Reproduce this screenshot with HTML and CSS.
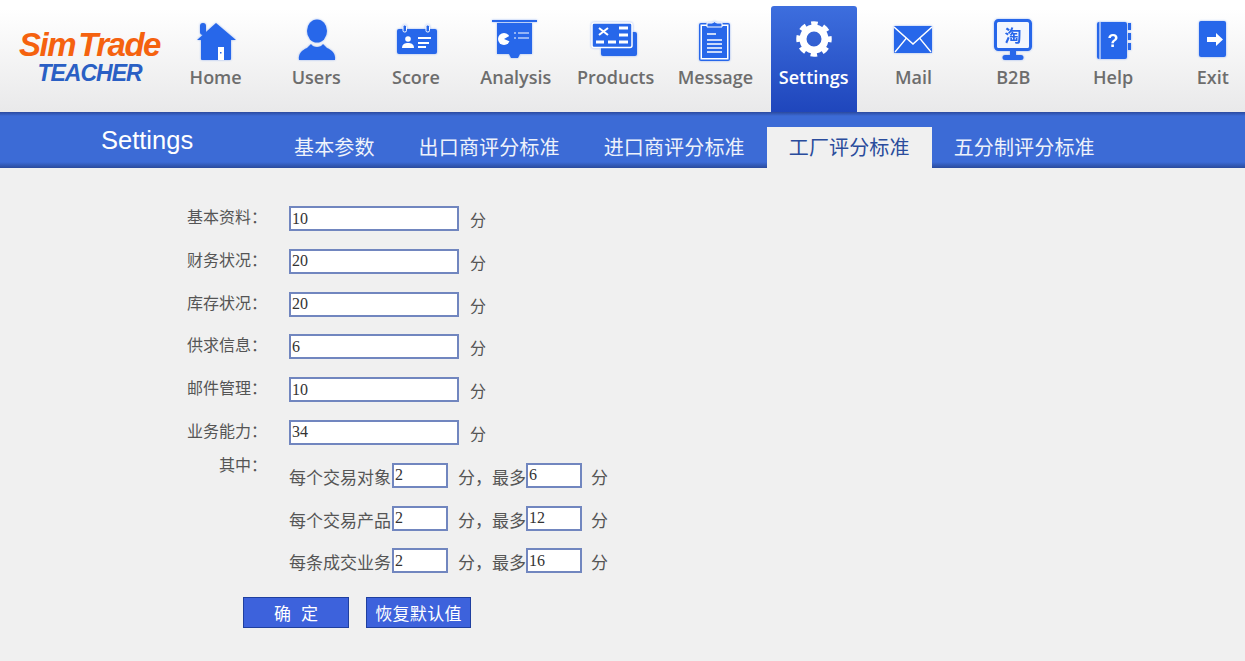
FILE: index.html
```html
<!DOCTYPE html>
<html lang="zh-CN">
<head>
    <meta charset="UTF-8">
    <title>SimTrade Teacher - Settings</title>
    <link rel="stylesheet" href="styles.css">
</head>
<body>
    <div class="header">
        <div class="logo">
            <div class="logo-top">Sim<span class="logo-gap">Trade</span></div>
            <div class="logo-sub">TEACHER</div>
        </div>
        <div class="nav">
            <a class="nav-item nav-first">
                <svg class="icon" viewBox="0 0 44 44"><rect x="6" y="6" width="6" height="12" rx="3" fill="#2767ea"/><path fill="#2767ea" d="M22 6 42 23H37V42a1 1 0 0 1-1 1H8a1 1 0 0 1-1-1V23H3z"/><rect x="24" y="30" width="6" height="13" fill="#fff"/><rect x="26" y="35" width="1.5" height="1.5" fill="#2767ea"/></svg>
                <span>Home</span>
            </a>
            <a class="nav-item">
                <svg class="icon" viewBox="0 0 44 44"><ellipse cx="23" cy="14" rx="10" ry="11.500" fill="#2767ea"/><path fill="#2767ea" d="M5 43C4 37 8 33 13 31L17 27C19 31 27 31 29 27L33 31C38 33 42 37 41 43Z"/></svg>
                <span>Users</span>
            </a>
            <a class="nav-item">
                <svg class="icon" viewBox="0 0 44 44"><rect x="3" y="12" width="40" height="25" rx="2" fill="#2767ea"/><rect x="9" y="8" width="3.500" height="7" rx="1.500" fill="#2767ea" stroke="#fff" stroke-width="1"/><rect x="32" y="8" width="3.500" height="7" rx="1.500" fill="#2767ea" stroke="#fff" stroke-width="1"/><circle cx="14" cy="22" r="2.800" fill="#fff"/><path fill="#fff" d="M8 31c0-4 3-5 6-5s6 1 6 5z"/><path stroke="#fff" stroke-width="2" d="M24 21h13M24 26h11M24 30h8"/></svg>
                <span>Score</span>
            </a>
            <a class="nav-item">
                <svg class="icon" viewBox="0 0 44 44"><path stroke="#2767ea" stroke-width="2" d="M-2 4h45"/><rect x="3" y="6" width="35" height="31" fill="#2767ea"/><path d="M15 37h11l-2 4h-7z" fill="#2767ea"/><circle cx="10" cy="22" r="6" fill="#fff"/><path d="M10 22l7-4v7z" fill="#2767ea"/><path stroke="#fff" stroke-width="1.200" d="M24 16h11M24 21h11M20 16h2M20 21h2"/></svg>
                <span>Analysis</span>
            </a>
            <a class="nav-item">
                <svg class="icon" viewBox="0 0 44 44"><rect x="7" y="15" width="36" height="24" rx="2" fill="#2767ea"/><rect x="-2" y="6" width="40" height="24.500" rx="2" fill="#2767ea" stroke="#fff" stroke-width="1.500"/><path stroke="#fff" stroke-width="2" d="M5 11l9 7M14 11l-9 7"/><path stroke="#fff" stroke-width="3" d="M25 11h9M25 18h9M2 25h8M14 25h8M25 25h9"/></svg>
                <span>Products</span>
            </a>
            <a class="nav-item">
                <svg class="icon" viewBox="0 0 44 44"><rect x="6" y="6" width="31" height="38" rx="2" fill="#2767ea"/><rect x="7.500" y="7.500" width="28" height="35" fill="#fff"/><rect x="9" y="9" width="25" height="32" fill="#2767ea"/><path d="M14 10V6h5a3.500 3.500 0 0 1 5 0h5v4z" fill="#2767ea" stroke="#fff" stroke-width="1"/><path stroke="#fff" stroke-width="1.500" d="M14 17h9M14 23h15M14 27h15M14 31h15M14 35h15"/></svg>
                <span>Message</span>
            </a>
            <a class="nav-item nav-active">
                <svg class="icon" viewBox="0 0 44 44"><circle cx="22" cy="22" r="11" fill="none" stroke="#fff" stroke-width="7"/><circle cx="22" cy="22" r="15.500" fill="none" stroke="#fff" stroke-width="4.500" stroke-dasharray="6.500 5.670" stroke-dashoffset="3.250"/></svg>
                <span>Settings</span>
            </a>
            <a class="nav-item">
                <svg class="icon" viewBox="0 0 44 44"><rect x="3" y="9" width="38" height="27" rx="1" fill="#2767ea"/><path fill="none" stroke="#fff" stroke-width="1.600" d="M3 10 22 27 41 10"/><path fill="none" stroke="#fff" stroke-width="1.300" d="M4 35 15.500 21M40 35 28.500 21"/></svg>
                <span>Mail</span>
            </a>
            <a class="nav-item">
                <svg class="icon" viewBox="0 0 44 44"><rect x="4.500" y="3.500" width="35" height="29" rx="3" fill="#f2f6fe" stroke="#2767ea" stroke-width="3"/><path d="M19 34h6v4h5a2.500 2.500 0 0 1 0 5H14a2.500 2.500 0 0 1 0-5h5z" fill="#2767ea"/><text x="22" y="25" class="taobao">淘</text></svg>
                <span>B2B</span>
            </a>
            <a class="nav-item">
                <svg class="icon" viewBox="0 0 44 44"><rect x="6" y="5" width="30" height="37" rx="2" fill="#2767ea"/><path stroke="#fff" stroke-width="1" d="M9 5v37"/><path stroke="#2767ea" stroke-width="3" d="M38.500 6v7M38.500 16v7M38.500 26v7"/><text x="22" y="30" class="help-q">?</text></svg>
                <span>Help</span>
            </a>
            <a class="nav-item">
                <svg class="icon" viewBox="0 0 44 44"><rect x="8" y="4" width="27" height="36" rx="2" fill="#2767ea"/><path fill="#fff" d="M16 20h9v-4l7 6.500-7 6.500v-4h-9z"/></svg>
                <span>Exit</span>
            </a>
        </div>
    </div>

    <div class="subbar">
        <div class="subbar-title">Settings</div>
        <div class="tabs">
            <a class="tab">基本参数</a>
            <a class="tab">出口商评分标准</a>
            <a class="tab">进口商评分标准</a>
            <a class="tab tab-active">工厂评分标准</a>
            <a class="tab">五分制评分标准</a>
        </div>
    </div>

    <div class="content">
        <div class="row">
            <label class="row-label">基本资料：</label>
            <input class="box" type="text" value="10">
            <span class="unit">分</span>
        </div>
        <div class="row">
            <label class="row-label">财务状况：</label>
            <input class="box" type="text" value="20">
            <span class="unit">分</span>
        </div>
        <div class="row">
            <label class="row-label">库存状况：</label>
            <input class="box" type="text" value="20">
            <span class="unit">分</span>
        </div>
        <div class="row">
            <label class="row-label">供求信息：</label>
            <input class="box" type="text" value="6">
            <span class="unit">分</span>
        </div>
        <div class="row">
            <label class="row-label">邮件管理：</label>
            <input class="box" type="text" value="10">
            <span class="unit">分</span>
        </div>
        <div class="row">
            <label class="row-label">业务能力：</label>
            <input class="box" type="text" value="34">
            <span class="unit">分</span>
        </div>
        <div class="row sub-row">
            <label class="row-label label-up">其中：</label>
            <span class="sub-name">每个交易对象</span>
            <input class="box box-small" type="text" value="2">
            <span class="sub-text">分，最多</span>
            <input class="box box-small" type="text" value="6">
            <span class="unit">分</span>
        </div>
        <div class="row sub-row">
            <label class="row-label"></label>
            <span class="sub-name">每个交易产品</span>
            <input class="box box-small" type="text" value="2">
            <span class="sub-text">分，最多</span>
            <input class="box box-small" type="text" value="12">
            <span class="unit">分</span>
        </div>
        <div class="row sub-row">
            <label class="row-label"></label>
            <span class="sub-name">每条成交业务</span>
            <input class="box box-small" type="text" value="2">
            <span class="sub-text">分，最多</span>
            <input class="box box-small" type="text" value="16">
            <span class="unit">分</span>
        </div>
        <div class="buttons">
            <button class="btn btn-ok">确 定</button>
            <button class="btn btn-reset">恢复默认值</button>
        </div>
    </div>
</body>
</html>
```
FILE: styles.css
```css
body {
    margin: 0;
    background-color: #f0f0f0;
    font-family: "Liberation Serif", "Noto Sans CJK SC", serif;
    color: #444;
}

/* top nav */
.header {
    height: 112px;
    display: flex;
    overflow: hidden;
    background: linear-gradient(#ffffff 8%, #e9e9ea);
}
.logo {
    flex: none;
    width: 165px;
    padding-top: 28px;
    box-sizing: border-box;
    font-family: "Liberation Sans", sans-serif;
    font-style: italic;
    font-weight: bold;
    text-align: center;
}
.logo-top {
    padding-left: 14px;
    font-size: 33px;
    line-height: 34px;
    letter-spacing: -1.5px;
    color: #f5620f;
}
.logo-gap {
    margin-left: 3px;
}
.logo-sub {
    padding-left: 14px;
    font-size: 23px;
    line-height: 22px;
    letter-spacing: -1px;
    color: #2a5fc4;
}
.nav {
    display: flex;
}
.nav-item {
    flex: none;
    width: 99.800px;
    display: flex;
    flex-direction: column;
    align-items: center;
    padding-top: 17px;
    box-sizing: border-box;
    font-family: "Open Sans", sans-serif;
    font-size: 18px;
    font-weight: 600;
    line-height: 26px;
    color: #6d6d6d;
}
.nav-first {
    width: 101.300px;
}
.icon {
    width: 44px;
    height: 44px;
    margin-bottom: 3px;
    overflow: visible;
    filter: drop-shadow(0 0 1px rgba(39, 103, 234, 0.45));
}
.nav-active {
    width: 86px;
    margin: 6px 6.900px 0 5.400px;
    padding-top: 11px;
    border-radius: 3px 3px 0 0;
    color: #fff;
    background: linear-gradient(#3d6ede, #1f46bc);
}
.nav-active .icon {
    filter: none;
}
.taobao {
    font-family: "Noto Sans CJK SC", sans-serif;
    font-size: 17px;
    text-anchor: middle;
    fill: #2767ea;
}
.help-q {
    font-family: "Liberation Sans", sans-serif;
    font-size: 18px;
    font-weight: bold;
    text-anchor: middle;
    fill: #fff;
}

/* blue bar */
.subbar {
    height: 56px;
    display: flex;
    background: linear-gradient(#2b4a9f, #3c6bd6 4px, #3c6bd6 50px, #2a4a9c);
}
.subbar-title {
    width: 272px;
    padding: 14px 0 0 101px;
    box-sizing: border-box;
    font-family: "Liberation Sans", sans-serif;
    font-size: 25.500px;
    color: #fff;
}
.tabs {
    display: flex;
    align-items: flex-end;
}
.tab {
    height: 41px;
    padding: 0 22px;
    font-family: "Noto Sans CJK SC", sans-serif;
    font-size: 20px;
    letter-spacing: 0.150px;
    line-height: 40px;
    color: #eef2fb;
}
.tab-active {
    color: #2a4c9c;
    background-color: #f0f0f0;
}

/* form */
.content {
    padding-top: 38px;
}
.row {
    height: 42.800px;
    display: flex;
    align-items: flex-start;
    font-family: "Noto Sans CJK SC", sans-serif;
    font-size: 16px;
}
.row-label {
    width: 267px;
    padding-right: 22px;
    text-align: right;
    line-height: 20px;
    color: #555;
}
.label-up {
    margin-top: -9px;
}
.box {
    width: 170px;
    height: 25px;
    padding: 0 1px;
    box-sizing: border-box;
    border: 2px solid #7186bf;
    background-color: #fff;
    font-family: "Liberation Serif", serif;
    font-size: 16px;
    color: #333;
    outline: none;
}
.box-small {
    width: 56px;
}
.unit {
    margin-left: 11px;
    line-height: 27px;
    color: #555;
}
.sub-row {
    font-size: 17px;
}
.sub-row .row-label {
    font-size: 16px;
}
.sub-row .unit {
    margin-left: 9px;
}
.sub-name {
    width: 103px;
    white-space: nowrap;
    line-height: 27px;
    color: #555;
}
.sub-text {
    width: 68px;
    margin-left: 10px;
    line-height: 27px;
    color: #555;
    white-space: nowrap;
}
.buttons {
    display: flex;
    gap: 17px;
    padding: 5.800px 0 0 243px;
}
.btn {
    width: 106px;
    height: 31px;
    padding: 0;
    border: 1px solid #1f3f9f;
    background-color: #3d62dc;
    font-family: "Noto Sans CJK SC", sans-serif;
    font-size: 17px;
    color: #fff;
}
.btn-ok {
    word-spacing: 6px;
}
.btn-reset {
    width: 105px;
    letter-spacing: 0.300px;
}
```
